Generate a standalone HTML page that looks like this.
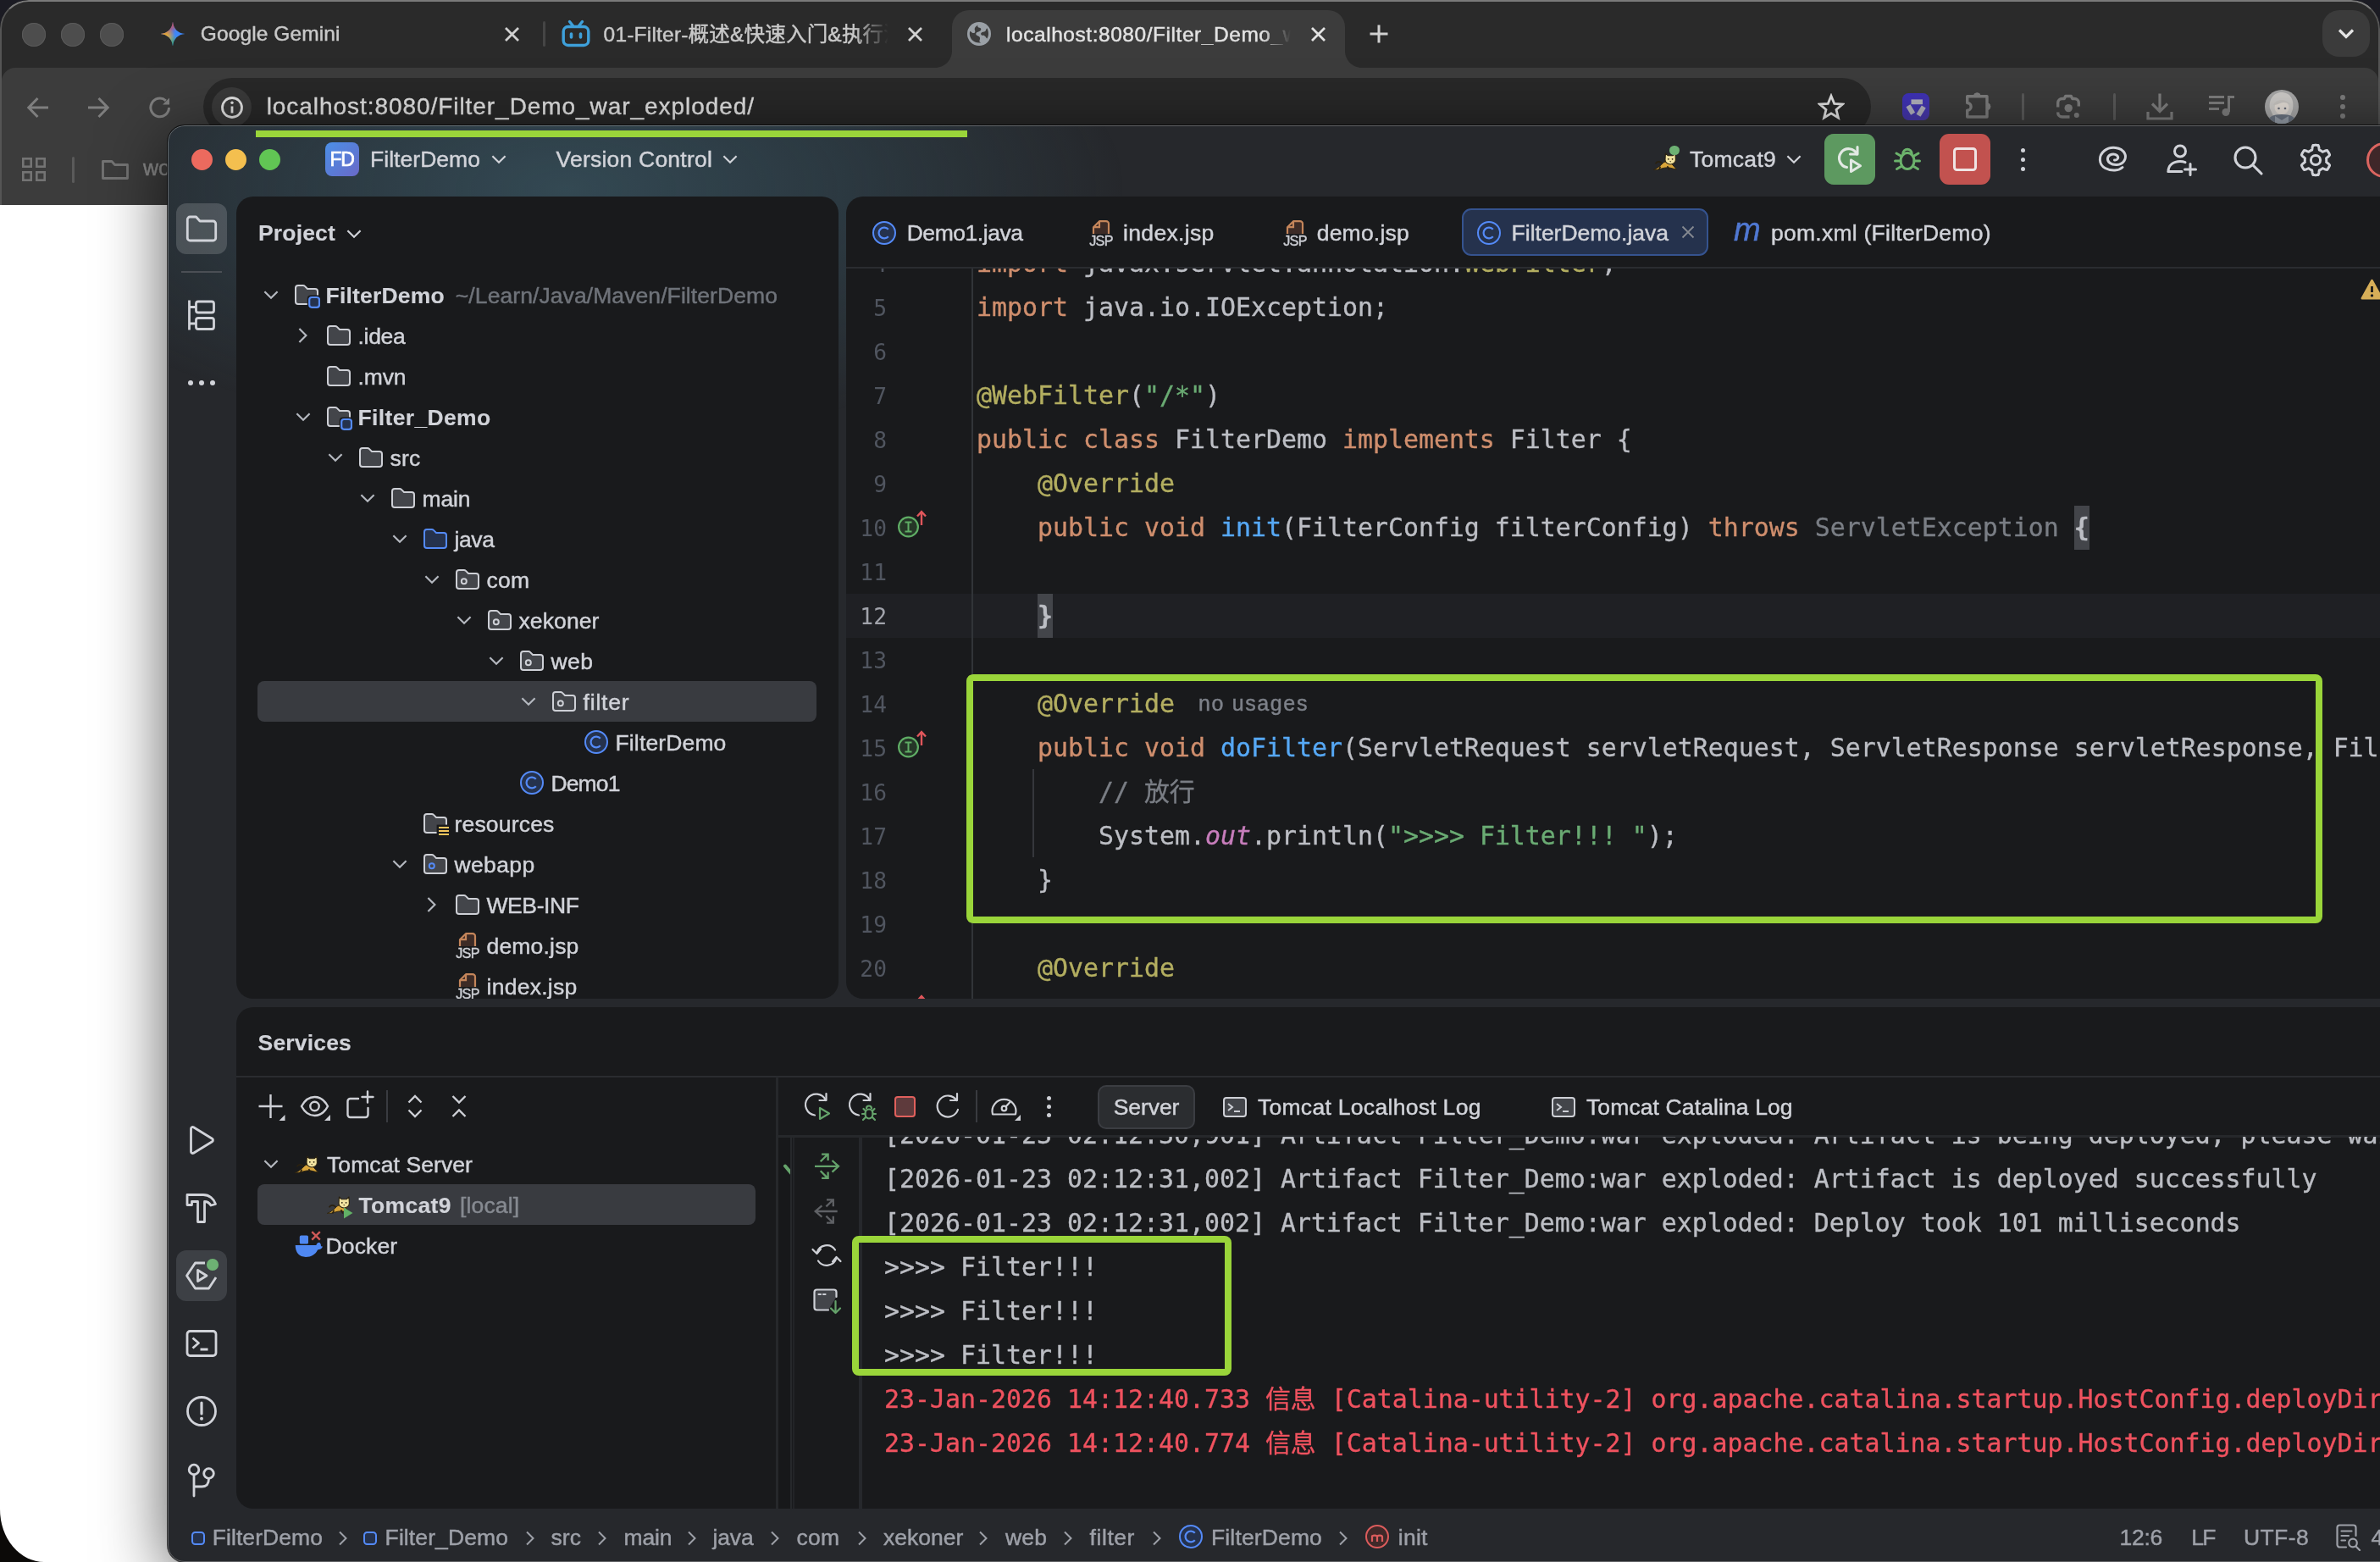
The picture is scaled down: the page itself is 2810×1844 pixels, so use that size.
<!DOCTYPE html>
<html lang="zh"><head><meta charset="utf-8"><title>localhost:8080/Filter_Demo_war_exploded/</title>
<style>
html,body{margin:0;padding:0}
html{overflow:hidden;background:#0c0a08}
body{width:2810px;height:1844px;position:relative;overflow:hidden;background:linear-gradient(180deg,#1b1b23 0,#1b1b23 8%,#0c0a08 92%);font-family:"Liberation Sans","Noto Sans CJK SC",sans-serif;-webkit-font-smoothing:antialiased}
.a{position:absolute;display:block}
.clip{overflow:hidden}
.t{position:absolute;white-space:nowrap;display:block;-webkit-text-stroke:0.45px currentColor}
.m{position:absolute;white-space:pre;display:block;font-family:"DejaVu Sans Mono","Liberation Mono","Noto Sans CJK SC",monospace}
.code{font-size:29.9px;line-height:52px;height:52px;color:#bcbec4;-webkit-text-stroke:0.35px currentColor}
.code span{display:inline-block;height:42px;line-height:42px;vertical-align:middle}
#cw{position:absolute;left:0;top:0;width:2810px;height:242px;border-radius:34px 34px 0 0;overflow:hidden;background:#2a2a2a;will-change:transform}
#cw:after{content:"";position:absolute;left:0;top:0;right:0;height:242px;border-radius:34px 34px 0 0;border:2px solid #555;border-top:2px solid #7a7a7a;border-bottom:none;box-sizing:border-box;pointer-events:none}
#tabstrip{position:absolute;left:0;top:0;width:2810px;height:82px;background:#2a2a2a}
#toolbar{position:absolute;left:2px;top:80px;width:2806px;height:162px;background:#3c3c3c;border-radius:16px 16px 0 0}
#page{position:absolute;left:0;top:241px;width:2810px;height:1603px;background:#fff;border-bottom-left-radius:52px 62px}
#ide{position:absolute;left:198px;top:148px;width:2700px;height:1696px;border-radius:20px;overflow:hidden;background:#26282c;box-shadow:0 0 0 1px rgba(0,0,0,0.7),0 16px 80px rgba(0,0,0,0.66)}
#ide:after{content:"";position:absolute;inset:0;border-radius:20px;border:1.5px solid rgba(255,255,255,0.28);pointer-events:none}
#idein{position:absolute;left:-198px;top:-148px;width:2810px;height:1844px;will-change:transform}
#glow{position:absolute;left:198px;top:148px;width:1700px;height:800px;background:radial-gradient(ellipse 660px 300px at 470px 75px,rgba(72,122,142,0.40),rgba(62,108,128,0.27) 45%,rgba(50,90,110,0) 100%)}
.panel{position:absolute;background:#191a1c;border-radius:20px}
</style></head>
<body>
<div id="page"></div>
<div id="cw">
<div id="tabstrip"></div>
<div class="a" style="left:25.7px;top:26.5px;width:28px;height:28px;border-radius:50%;background:#4d4d4d;box-shadow:inset 0 0 0 1px #5a5a5a"></div>
<div class="a" style="left:71.9px;top:26.5px;width:28px;height:28px;border-radius:50%;background:#4d4d4d;box-shadow:inset 0 0 0 1px #5a5a5a"></div>
<div class="a" style="left:117.8px;top:26.5px;width:28px;height:28px;border-radius:50%;background:#4d4d4d;box-shadow:inset 0 0 0 1px #5a5a5a"></div>
<svg class="a" style="left:189px;top:25px" width="30" height="30" viewBox="0 0 30 30"><defs><radialGradient id="g1" cx="0.1" cy="0.25" r="0.55"><stop offset="0" stop-color="#f2403a"/><stop offset="1" stop-color="#f2403a" stop-opacity="0"/></radialGradient><radialGradient id="g2" cx="0.2" cy="0.62" r="0.4"><stop offset="0" stop-color="#fbbc12"/><stop offset="1" stop-color="#fbbc12" stop-opacity="0"/></radialGradient><radialGradient id="g3" cx="0.5" cy="1" r="0.45"><stop offset="0" stop-color="#2fa854"/><stop offset="1" stop-color="#2fa854" stop-opacity="0"/></radialGradient><radialGradient id="g4" cx="0.5" cy="0" r="0.4"><stop offset="0" stop-color="#e8453c"/><stop offset="1" stop-color="#e8453c" stop-opacity="0"/></radialGradient><clipPath id="gs"><path d="M15 0.5C15.600 8.800 21.200 14.400 29.500 15C21.200 15.600 15.600 21.200 15 29.500C14.400 21.200 8.800 15.600 0.500 15C8.800 14.400 14.400 8.800 15 0.500Z"/></clipPath></defs><g clip-path="url(#gs)"><rect width="30" height="30" fill="#3e86f6"/><rect width="30" height="30" fill="url(#g4)"/><rect width="30" height="30" fill="url(#g3)"/><rect width="30" height="30" fill="url(#g1)"/><rect width="30" height="30" fill="url(#g2)"/></g></svg>
<span class="t" style="left:236.8px;top:27.9px;font-size:24.5px;line-height:24.5px;color:#c9c9c9;letter-spacing:0.100px;">Google Gemini</span>
<svg class="a" style="left:594.5px;top:30.5px" width="19.0" height="19.0" viewBox="-9.5 -9.5 19.0 19.0"><path d="M-7.5 -7.5L7.5 7.5M7.5 -7.5L-7.5 7.5" stroke="#d0d0d0" stroke-width="2.8" fill="none"/></svg>
<div class="a" style="left:641px;top:25px;width:3px;height:30px;background:#454545;border-radius:2px"></div>
<svg class="a" style="left:663px;top:23px" width="34" height="33" viewBox="0 0 34 33" fill="none" stroke="#3ea0da" stroke-width="3.4" stroke-linecap="round" stroke-linejoin="round"><rect x="2.2" y="8.5" width="29.6" height="22" rx="5.5"/><path d="M9.5 2.5l4 5M24.5 2.5l-4 5"/><path d="M11.5 17v4M22.5 17v4" stroke-width="3.6"/></svg>
<span class="t" style="left:712.6px;top:27.6px;font-size:24.5px;line-height:25px;color:#c9c9c9;width:336px;overflow:hidden;white-space:nowrap;letter-spacing:0.2px;-webkit-mask-image:linear-gradient(90deg,#000 88%,transparent 100%);mask-image:linear-gradient(90deg,#000 88%,transparent 100%)">01-Filter-概述&amp;快速入门&amp;执行流程&amp;拦截路径</span>
<svg class="a" style="left:1070.5px;top:30.5px" width="19.0" height="19.0" viewBox="-9.5 -9.5 19.0 19.0"><path d="M-7.5 -7.5L7.5 7.5M7.5 -7.5L-7.5 7.5" stroke="#d0d0d0" stroke-width="2.8" fill="none"/></svg>
<div class="a" style="left:1124px;top:12px;width:464px;height:70px;background:#3c3c3c;border-radius:20px 20px 0 0"></div>
<svg class="a" style="left:1104px;top:60px" width="20" height="20" viewBox="0 0 20 20"><path d="M20 0V20H0C11 20 20 11 20 0Z" fill="#3c3c3c"/></svg>
<svg class="a" style="left:1588px;top:60px" width="20" height="20" viewBox="0 0 20 20"><path d="M0 0V20H20C9 20 0 11 0 0Z" fill="#3c3c3c"/></svg>
<svg class="a" style="left:1142px;top:26px" width="28" height="28" viewBox="0 0 28 28"><circle cx="14" cy="14" r="14" fill="#9aa0a6"/><path d="M12.5 3.2c-1 2 .5 3.3 2 3.6 2 .4 2.4 2 1 3.4-1.6 1.6-4.8 1-5.2 3.6-.3 2 2.2 2.4 3.6 3.2 1.7 1 1.2 3.2.6 4.8-.5 1.4.6 2.4 1.8 2.6C9 25.6 2.8 20.4 2.8 14c0-1.2.2-2.3.5-3.3 1.8.9 2.6 2.6 4.4 2.4 2-.2 1.8-2.2 1.2-3.6-.7-1.7.3-3.6 2-4.7.5-.3 1-.9 1.6-1.6zM25 14c0 2-.6 4-1.600 5.600-1.2-.8-1.4-2.600-2.800-3.200-1.600-.7-3.600.2-4.400-1.800-.6-1.600 1-2.800 2.600-2.900 1.800-.1 3-.9 3.400-2.700.2-.8.6-1.300 1.200-1.700C24.400 9.200 25 11.500 25 14z" fill="#3c3c3c"/></svg>
<span class="t" style="left:1188px;top:27.6px;font-size:24.5px;line-height:25px;color:#e3e3e3;width:336px;overflow:hidden;white-space:nowrap;letter-spacing:0.55px;-webkit-mask-image:linear-gradient(90deg,#000 90%,transparent 100%);mask-image:linear-gradient(90deg,#000 90%,transparent 100%)">localhost:8080/Filter_Demo_war_exploded</span>
<svg class="a" style="left:1546.5px;top:30.5px" width="19.0" height="19.0" viewBox="-9.5 -9.5 19.0 19.0"><path d="M-7.5 -7.5L7.5 7.5M7.5 -7.5L-7.5 7.5" stroke="#e3e3e3" stroke-width="2.8" fill="none"/></svg>
<svg class="a" style="left:1616px;top:28px" width="24" height="24" viewBox="0 0 24 24"><path d="M12 1.500V22.500M1.500 12H22.500" stroke="#d0d0d0" stroke-width="3" fill="none"/></svg>
<div class="a" style="left:2742px;top:12px;width:56px;height:55px;background:#3b3b3b;border-radius:20px"></div>
<svg class="a" style="left:2758px;top:32px" width="24" height="16" viewBox="0 0 24 16"><path d="M4 3.500L12 11.500L20 3.500" stroke="#e3e3e3" stroke-width="3.2" fill="none"/></svg>
<div id="toolbar"></div>
<svg class="a" style="left:30px;top:112px" width="30" height="30" viewBox="0 0 30 30" fill="none" stroke="#7e7e7e" stroke-width="3"><path d="M27 15H4M14.500 4L3.800 15L14.500 26"/></svg>
<svg class="a" style="left:101px;top:112px" width="30" height="30" viewBox="0 0 30 30" fill="none" stroke="#7e7e7e" stroke-width="3"><path d="M3 15H26M15.500 4L26.200 15L15.500 26"/></svg>
<svg class="a" style="left:174px;top:112px" width="30" height="30" viewBox="0 0 30 30" fill="none" stroke="#7e7e7e" stroke-width="3"><path d="M25.500 15A10.800 10.800 0 1 1 21.800 6.800"/><path d="M26 3.500V11.500H18z" fill="#7e7e7e" stroke="none"/></svg>
<div class="a" style="left:240px;top:92px;width:1969px;height:68px;background:#282828;border-radius:34px"></div>
<div class="a" style="left:250px;top:103px;width:47px;height:47px;background:#3a3a3a;border-radius:50%"></div>
<svg class="a" style="left:259.500px;top:112.500px" width="28" height="28" viewBox="0 0 28 28" fill="none" stroke="#e3e3e3" stroke-width="2.800"><circle cx="14" cy="14" r="11.500"/><path d="M14 12.500V20.500" /><circle cx="14" cy="8.300" r="1.700" fill="#e3e3e3" stroke="none"/></svg>
<span class="t" style="left:314.7px;top:112.3px;font-size:28px;line-height:28px;color:#e3e3e3;letter-spacing:0.945px;-webkit-text-stroke:0.35px #e3e3e3;">localhost:8080/Filter_Demo_war_exploded/</span>
<svg class="a" style="left:2146px;top:110px" width="32" height="32" viewBox="0 0 32 32" fill="none" stroke="#e3e3e3" stroke-width="2.800" stroke-linejoin="miter"><path d="M16 3.200L19.700 12.300L29.500 13L22 19.400L24.400 29L16 23.800L7.600 29L10 19.400L2.500 13L12.300 12.300Z"/></svg>
<div class="a" style="left:2245.700px;top:109.600px;width:32.500px;height:32.500px;background:linear-gradient(160deg,#3c30bb,#4a3aa8);border-radius:7.500px"></div>
<svg class="a" style="left:2246px;top:110px" width="32" height="32" viewBox="0 0 32 32" fill="none" stroke="#b3b2be" stroke-width="5.800" stroke-linejoin="round" stroke-linecap="butt"><path d="M10.500 10.300H24"/><path d="M25.300 16L19 26.300"/><path d="M7 14.800L12.600 24.300"/></svg>
<svg class="a" style="left:2316px;top:106px" width="40" height="40" viewBox="0 0 40 40" fill="none" stroke="#7e7e7e" stroke-width="3.400" stroke-linejoin="round"><path d="M6.700 7.700H30V32H6.700V24.300A4.400 4.400 0 0 0 6.700 15.500Z"/><path d="M14.300 7.700A4 4 0 0 1 22.300 7.700ZM30 15.800A4 4 0 0 1 30 23.800Z" fill="#7e7e7e" stroke-width="1"/></svg>
<div class="a" style="left:2386.500px;top:110px;width:3px;height:32px;background:#5a5a5a;border-radius:2px"></div>
<svg class="a" style="left:2424px;top:108px" width="36" height="36" viewBox="0 0 36 36" fill="none" stroke="#7e7e7e" stroke-width="3.400" stroke-linecap="butt" stroke-linejoin="round"><path d="M5.700 18.500V13.500A5 5 0 0 1 10.700 8.500H13.200L14.700 5.500H21.300L22.800 8.500H25.300A5 5 0 0 1 30.300 13.500V17.500"/><path d="M5.700 24.500V25A5 5 0 0 0 10.700 30H19.500"/><circle cx="18.200" cy="19.600" r="4.700" fill="#7e7e7e" stroke="none"/><circle cx="27.800" cy="28" r="3" fill="#7e7e7e" stroke="none"/></svg>
<div class="a" style="left:2494.500px;top:110px;width:3px;height:32px;background:#5a5a5a;border-radius:2px"></div>
<svg class="a" style="left:2533px;top:108px" width="34" height="36" viewBox="0 0 34 36" fill="none" stroke="#7e7e7e" stroke-width="3.200"><path d="M17 2.500V23M8 14.500L17 23.500L26 14.500M3 24V32H31V24"/></svg>
<svg class="a" style="left:2607px;top:111px" width="32" height="28" viewBox="0 0 32 28" fill="none" stroke="#7e7e7e" stroke-width="3"><path d="M1 3.500H19M1 10.500H19M1 17.500H13"/><path d="M24.500 21V3.500H31" /><circle cx="21" cy="21.500" r="4.500" fill="#7e7e7e" stroke="none"/></svg>
<svg class="a" style="left:2674px;top:106px" width="40" height="40" viewBox="0 0 40 40"><defs><clipPath id="av"><circle cx="20" cy="20" r="20"/></clipPath></defs><g clip-path="url(#av)"><rect width="40" height="40" fill="#a9a9a9"/><path d="M6 22C4 8 14 2 21 3c9 1 14 8 12 20l-3 8H10z" fill="#cfcdca"/><ellipse cx="20" cy="21" rx="8.500" ry="8" fill="#e6dfd8"/><path d="M10 18c3-7 14-9 21 0-5-3-9-4-13-2-3 1-5 2-8 2z" fill="#c9c6c2"/><circle cx="16.500" cy="22" r="1.300" fill="#6a6f7a"/><circle cx="24" cy="22" r="1.300" fill="#6a6f7a"/><path d="M2 40c1-8 8-11 18-11s17 3 18 11z" fill="#6d7684"/><path d="M12 31l8 5 8-5v9H12z" fill="#9aa2ad"/></g></svg>
<div class="a" style="left:2763px;top:112px;width:6px;height:6px;border-radius:50%;background:#7e7e7e"></div>
<div class="a" style="left:2763px;top:123px;width:6px;height:6px;border-radius:50%;background:#7e7e7e"></div>
<div class="a" style="left:2763px;top:134px;width:6px;height:6px;border-radius:50%;background:#7e7e7e"></div>
<svg class="a" style="left:26px;top:186px" width="28" height="28" viewBox="0 0 28 28" fill="none" stroke="#747474" stroke-width="2.600"><rect x="1.300" y="1.300" width="9.400" height="9.400"/><rect x="17.300" y="1.300" width="9.400" height="9.400"/><rect x="1.300" y="17.300" width="9.400" height="9.400"/><rect x="17.300" y="17.300" width="9.400" height="9.400"/></svg>
<div class="a" style="left:84.500px;top:185px;width:3px;height:31px;background:#5a5a5a;border-radius:2px"></div>
<svg class="a" style="left:119px;top:188px" width="34" height="25" viewBox="0 0 34 25" fill="none" stroke="#747474" stroke-width="2.800" stroke-linejoin="round"><path d="M2.500 22.500V2.500H13l3.500 4H31.500V22.500Z"/></svg>
<span class="t" style="left:169px;top:186px;font-size:25px;line-height:25px;color:#8a8a8a">workspace</span>
</div>
<div id="ide"><div id="idein"><div id="glow"></div>
<div class="a" style="left:302px;top:154px;width:840px;height:8px;background:#9ad53a"></div>
<div class="a" style="left:225.5px;top:175.500px;width:25px;height:25px;border-radius:50%;background:#ec6a5e"></div>
<div class="a" style="left:265.5px;top:175.500px;width:25px;height:25px;border-radius:50%;background:#f4bf4f"></div>
<div class="a" style="left:305.5px;top:175.500px;width:25px;height:25px;border-radius:50%;background:#61c554"></div>
<div class="a" style="left:384px;top:168px;width:40px;height:40px;border-radius:8px;background:linear-gradient(135deg,#4c8fe6 0%,#5a7bd6 55%,#6a69c8 100%)"></div>
<span class="t" style="left:389.5px;top:177.1px;font-size:23px;line-height:23px;color:#ffffff;letter-spacing:-1.279px;-webkit-text-stroke:0.7px #fff;">FD</span>
<span class="t" style="left:437.0px;top:174.6px;font-size:26.5px;line-height:26.5px;color:#d1d3d9;letter-spacing:0.043px;">FilterDemo</span>
<svg class="a" style="left:573.0px;top:172.0px" width="32" height="32" viewBox="0 0 16 16" stroke-width="1"><path d="M4.200 6.100L8 9.900L11.800 6.100" fill="none" stroke="#d1d3d9" stroke-width="1.100"/></svg>
<span class="t" style="left:656.5px;top:174.6px;font-size:26.5px;line-height:26.5px;color:#d1d3d9;letter-spacing:0.222px;">Version Control</span>
<svg class="a" style="left:846.0px;top:172.0px" width="32" height="32" viewBox="0 0 16 16" stroke-width="1"><path d="M4.200 6.100L8 9.900L11.800 6.100" fill="none" stroke="#d1d3d9" stroke-width="1.100"/></svg>
<svg class="a" style="left:1950.0px;top:174.0px" width="32" height="32" viewBox="0 0 16 16" stroke-width="1"><path d="M6.200 9.500C4.800 8 3.200 8.200 2.300 9.700" fill="none" stroke="#2a2110" stroke-width="0.9"/><path d="M1.200 13.200C3.800 12.300 5.300 10.600 6.800 9.200C8.400 7.900 10 8.400 11.600 9.400L14.700 13C12.800 12.600 11.200 12 9.600 11.900C7 11.700 4.200 13.500 1.200 13.200Z" fill="#d9a53a" stroke="#2a2110" stroke-width="0.45"/><path d="M9.300 11.100L10.400 13.300M5.200 11.300L4.300 13.300" fill="none" stroke="#2a2110" stroke-width="0.8"/><path d="M8.200 3.500L9.700 4.900H12.500L14 3.500L14.200 7.200C14.200 8.800 12.800 10 11.100 10C9.400 10 8 8.800 8 7.200Z" fill="#f2e3a0" stroke="#2a2110" stroke-width="0.55" stroke-linejoin="round"/><circle cx="9.900" cy="6.900" r="0.450" fill="#2a2110"/><circle cx="12.300" cy="6.900" r="0.450" fill="#2a2110"/><path d="M10.600 8.100H11.600L11.100 8.700Z" fill="#2a2110"/></svg>
<div class="a" style="left:1971px;top:171.600px;width:11.600px;height:11.600px;border-radius:50%;background:#6db173"></div>
<span class="t" style="left:1995.0px;top:174.6px;font-size:26.5px;line-height:26.5px;color:#d1d3d9;letter-spacing:0.265px;">Tomcat9</span>
<svg class="a" style="left:2102.0px;top:172.0px" width="32" height="32" viewBox="0 0 16 16" stroke-width="1"><path d="M4.200 6.100L8 9.900L11.800 6.100" fill="none" stroke="#d1d3d9" stroke-width="1.100"/></svg>
<div class="a" style="left:2154px;top:158px;width:60px;height:60px;border-radius:11px;background:#5d9960"></div>
<svg class="a" style="left:2166px;top:170px" width="36" height="36" viewBox="0 0 36 36" fill="none" stroke="#e2e9e3" stroke-width="3.100" stroke-linejoin="round" stroke-linecap="round"><path d="M14.500 27.500A11 11 0 1 1 26.500 12"/><path d="M27 3.500V12H18.500"/><path d="M19.500 19V32.500L30.500 25.800Z"/></svg>
<svg class="a" style="left:2234px;top:170px" width="36" height="36" viewBox="0 0 36 36" fill="none" stroke="#6cb36c" stroke-width="3" stroke-linecap="round"><ellipse cx="18" cy="20" rx="8" ry="9.500"/><path d="M12.800 11.500A5.200 5.200 0 0 1 23.200 11.500"/><path d="M10 20H3.500M26 20H32.500M11 14.500L5 11M25 14.500L31 11M11.500 26L5.500 29.500M24.500 26L30.500 29.500"/></svg>
<div class="a" style="left:2290px;top:158px;width:60px;height:60px;border-radius:11px;background:#c2524f"></div>
<div class="a" style="left:2306px;top:174.200px;width:28px;height:28px;border:3px solid #f0e4e4;border-radius:4.500px;box-sizing:border-box"></div>
<div class="a" style="left:2385.500px;top:174.5px;width:5px;height:5px;border-radius:50%;background:#d1d3d9"></div>
<div class="a" style="left:2385.500px;top:185.5px;width:5px;height:5px;border-radius:50%;background:#d1d3d9"></div>
<div class="a" style="left:2385.500px;top:196.5px;width:5px;height:5px;border-radius:50%;background:#d1d3d9"></div>
<svg class="a" style="left:2475px;top:170px" width="38" height="36" viewBox="0 0 38 36" fill="none" stroke="#d1d3d9" stroke-width="3" stroke-linecap="round"><path d="M31 27.500C27 31.500 18 32.500 10.500 28.500C3 24.500 2 14 9.500 8C17 2 29.500 3.500 33.500 11C36.500 17 32 24 24.500 24.500C18 25 12.500 21.500 13.500 16.500C14.500 12 21 10.500 24.500 13.500C27 16 25 19.500 21.500 19"/></svg>
<svg class="a" style="left:2556px;top:168px" width="40" height="40" viewBox="0 0 40 40" fill="none" stroke="#d1d3d9" stroke-width="3" stroke-linecap="round"><circle cx="18" cy="10.500" r="6.500"/><path d="M4 34.500C4 27 10 22.500 18 22.500C20.500 22.500 22.500 23 24 23.600M3.800 34.500H20"/><path d="M30 25.500V38.500M23.500 32H36.500"/></svg>
<svg class="a" style="left:2635px;top:170px" width="38" height="38" viewBox="0 0 38 38" fill="none" stroke="#d1d3d9" stroke-width="3.100" stroke-linecap="round"><circle cx="16" cy="16" r="12"/><path d="M25 25L35 35"/></svg>
<svg class="a" style="left:2714px;top:168.500px" width="40" height="40" viewBox="-20 -20 40 40" fill="none" stroke="#d1d3d9" stroke-width="3" stroke-linejoin="round"><path d="M12.7 -0.0L12.7 -0.6L12.7 -1.1L12.6 -1.7L12.5 -2.2L13.4 -3.0L14.7 -3.9L15.9 -5.0L16.6 -6.1L16.4 -6.8L16.0 -7.5L15.7 -8.2L15.3 -8.8L14.9 -9.5L14.5 -10.2L14.0 -10.8L13.6 -11.4L12.3 -11.2L10.7 -10.7L9.3 -10.2L8.2 -9.7L7.7 -10.1L7.3 -10.4L6.8 -10.7L6.4 -11.0L5.9 -11.3L5.4 -11.5L4.9 -11.7L4.3 -11.9L4.1 -13.1L3.9 -14.7L3.6 -16.2L3.1 -17.4L2.3 -17.5L1.5 -17.6L0.8 -17.7L0.0 -17.7L-0.8 -17.7L-1.5 -17.6L-2.3 -17.5L-3.1 -17.4L-3.6 -16.2L-3.9 -14.7L-4.1 -13.1L-4.3 -11.9L-4.9 -11.7L-5.4 -11.5L-5.9 -11.3L-6.3 -11.0L-6.8 -10.7L-7.3 -10.4L-7.7 -10.1L-8.2 -9.7L-9.3 -10.2L-10.7 -10.7L-12.3 -11.2L-13.6 -11.4L-14.0 -10.8L-14.5 -10.2L-14.9 -9.5L-15.3 -8.9L-15.7 -8.2L-16.0 -7.5L-16.4 -6.8L-16.6 -6.1L-15.9 -5.0L-14.7 -3.9L-13.4 -3.0L-12.5 -2.2L-12.6 -1.7L-12.7 -1.1L-12.7 -0.6L-12.7 -0.0L-12.7 0.6L-12.7 1.1L-12.6 1.7L-12.5 2.2L-13.4 3.0L-14.7 3.9L-15.9 5.0L-16.6 6.1L-16.4 6.8L-16.0 7.5L-15.7 8.2L-15.3 8.9L-14.9 9.5L-14.5 10.2L-14.0 10.8L-13.6 11.4L-12.3 11.2L-10.7 10.7L-9.3 10.2L-8.2 9.7L-7.7 10.1L-7.3 10.4L-6.8 10.7L-6.4 11.0L-5.9 11.3L-5.4 11.5L-4.9 11.7L-4.3 11.9L-4.1 13.1L-3.9 14.7L-3.6 16.2L-3.1 17.4L-2.3 17.5L-1.5 17.6L-0.8 17.7L-0.0 17.7L0.8 17.7L1.5 17.6L2.3 17.5L3.1 17.4L3.6 16.2L3.9 14.7L4.1 13.1L4.3 11.9L4.9 11.7L5.4 11.5L5.9 11.3L6.3 11.0L6.8 10.7L7.3 10.4L7.7 10.1L8.2 9.7L9.3 10.2L10.7 10.7L12.3 11.2L13.6 11.4L14.0 10.8L14.5 10.2L14.9 9.5L15.3 8.8L15.7 8.2L16.0 7.5L16.4 6.8L16.6 6.1L15.9 5.0L14.7 3.9L13.4 3.0L12.5 2.2L12.6 1.7L12.7 1.1L12.7 0.6Z"/><circle r="5.600"/></svg>
<div class="a" style="left:2794px;top:168px;width:42px;height:42px;border-radius:50%;background:#3f2729;border:3px solid #db6560;box-sizing:border-box"></div>
<div class="a" style="left:208px;top:240px;width:60px;height:60px;border-radius:12px;background:rgba(255,255,255,0.16)"></div>
<svg class="a" style="left:218px;top:252px" width="40" height="36" viewBox="0 0 40 36" fill="none" stroke="#d1d3d9" stroke-width="2.800" stroke-linejoin="round"><path d="M3.300 7A3 3 0 0 1 6.300 4H13.500L18 9H33.700A3 3 0 0 1 36.700 12V29A3 3 0 0 1 33.700 32H6.300A3 3 0 0 1 3.300 29Z"/></svg>
<div class="a" style="left:214px;top:320px;width:48px;height:2px;background:#4b4f55"></div>
<svg class="a" style="left:220px;top:352px" width="36" height="40" viewBox="0 0 36 40" fill="none" stroke="#d1d3d9" stroke-width="2.800" stroke-linejoin="round"><path d="M3.500 2.500V37.500M3.500 10.500H11M3.500 30H11"/><rect x="11.500" y="4" width="21" height="13" rx="2.500"/><rect x="11.500" y="23.500" width="21" height="13" rx="2.500"/></svg>
<div class="a" style="left:222px;top:449px;width:6px;height:6px;border-radius:50%;background:#d1d3d9"></div>
<div class="a" style="left:235px;top:449px;width:6px;height:6px;border-radius:50%;background:#d1d3d9"></div>
<div class="a" style="left:248px;top:449px;width:6px;height:6px;border-radius:50%;background:#d1d3d9"></div>
<svg class="a" style="left:218px;top:1326px" width="40" height="40" viewBox="0 0 40 40" fill="none" stroke="#d1d3d9" stroke-width="2.800" stroke-linejoin="round"><path d="M7.500 6.500A2 2 0 0 1 10.500 4.800L32.500 18.300A2 2 0 0 1 32.500 21.700L10.500 35.200A2 2 0 0 1 7.500 33.500Z"/></svg>
<svg class="a" style="left:218px;top:1406px" width="40" height="40" viewBox="0 0 40 40" fill="none" stroke="#d1d3d9" stroke-width="2.800" stroke-linejoin="round"><path d="M3 4.500H22C29 4.500 34.500 9 36.500 15.500L31 17C29 13.500 26.500 12.500 23.500 12.500V36.500H15.500V12.500H8.500V16.500H3Z"/></svg>
<div class="a" style="left:208px;top:1476px;width:60px;height:60px;border-radius:12px;background:#3d4045"></div>
<svg class="a" style="left:218px;top:1486px" width="40" height="40" viewBox="0 0 40 40" fill="none" stroke="#d1d3d9" stroke-width="2.800" stroke-linejoin="round"><path d="M24 5H12.500L2.500 20L12.500 35H28.500L37 22"/><path d="M15.500 13.500V26.500L26 20Z"/></svg>
<div class="a" style="left:244.200px;top:1486px;width:13.600px;height:13.600px;border-radius:50%;background:#6db173"></div>
<svg class="a" style="left:218px;top:1566px" width="40" height="40" viewBox="0 0 40 40" fill="none" stroke="#d1d3d9" stroke-width="2.800" stroke-linejoin="round"><rect x="3" y="5.500" width="34" height="29" rx="3.500"/><path d="M9.500 13.500L16.500 19.500L9.500 25.500M18.500 27H27.500"/></svg>
<svg class="a" style="left:218px;top:1646px" width="40" height="40" viewBox="0 0 40 40" fill="none" stroke="#d1d3d9" stroke-width="2.800"><circle cx="20" cy="20" r="16.500"/><path d="M20 10V23" stroke-width="3.200" stroke-linecap="round"/><circle cx="20" cy="28.800" r="2" fill="#d1d3d9" stroke="none"/></svg>
<svg class="a" style="left:218px;top:1726.5px" width="40" height="42" viewBox="0 0 40 42" fill="none" stroke="#d1d3d9" stroke-width="2.800" stroke-linecap="round"><circle cx="11" cy="8" r="5.800"/><circle cx="28.500" cy="12.500" r="5.800"/><path d="M11 14V39M11 28H20.500C25.500 28 28.500 25 28.500 18.500"/></svg>
<div class="panel" style="left:279px;top:232px;width:711px;height:947px"></div>
<div class="a clip" style="left:279px;top:232px;width:711px;height:947px;border-radius:20px"><div class="a" style="left:-279px;top:-232px">
<span class="t" style="left:305.0px;top:261.6px;font-size:26.5px;line-height:26.5px;color:#d1d3d9;font-weight:700;-webkit-text-stroke:0.15px currentColor;letter-spacing:0.166px;">Project</span>
<svg class="a" style="left:402.0px;top:260.0px" width="32" height="32" viewBox="0 0 16 16" stroke-width="1"><path d="M4.200 6.100L8 9.900L11.800 6.100" fill="none" stroke="#d1d3d9" stroke-width="1.100"/></svg>
<svg class="a" style="left:304.0px;top:332.0px" width="32" height="32" viewBox="0 0 16 16" stroke-width="1"><path d="M4.200 6.100L8 9.900L11.800 6.100" fill="none" stroke="#b4b8bf" stroke-width="1.100"/></svg>
<svg class="a" style="left:346.0px;top:332.0px" width="32" height="32" viewBox="0 0 16 16" stroke-width="1"><path d="M1.5 4C1.5 3.17 2.17 2.5 3 2.5h2.9c.4 0 .78.16 1.06.44L8.5 4.5H13c.83 0 1.5.67 1.5 1.500v6c0 .83-.67 1.500-1.500 1.500H3c-.83 0-1.500-.67-1.500-1.500V4z" fill="#43454a" stroke="#ced0d6"/><rect x="8.400" y="8.300" width="8" height="8" rx="2" fill="#191a1c"/><rect x="9.600" y="9.500" width="5.900" height="5.900" rx="1.500" fill="#25324d" stroke="#548af7" stroke-width="1.100"/></svg>
<span class="t" style="left:384.5px;top:336.1px;font-size:26.5px;line-height:26.5px;color:#d1d3d9;font-weight:700;-webkit-text-stroke:0.15px currentColor;letter-spacing:0.189px;">FilterDemo</span>
<span class="t" style="left:537.8px;top:336.1px;font-size:26.5px;line-height:26.5px;color:#6f737a;letter-spacing:0.084px;">~/Learn/Java/Maven/FilterDemo</span>
<svg class="a" style="left:342.0px;top:380.0px" width="32" height="32" viewBox="0 0 16 16" stroke-width="1"><path d="M5.700 4L9.700 8L5.700 12" fill="none" stroke="#b4b8bf" stroke-width="1.100"/></svg>
<svg class="a" style="left:384.0px;top:380.0px" width="32" height="32" viewBox="0 0 16 16" stroke-width="1"><path d="M1.5 4C1.5 3.17 2.17 2.5 3 2.5h2.9c.4 0 .78.16 1.06.44L8.5 4.5H13c.83 0 1.5.67 1.5 1.500v6c0 .83-.67 1.500-1.500 1.500H3c-.83 0-1.500-.67-1.500-1.500V4z" fill="#43454a" stroke="#ced0d6"/></svg>
<span class="t" style="left:422.5px;top:384.1px;font-size:26.5px;line-height:26.5px;color:#d1d3d9;letter-spacing:-0.292px;">.idea</span>
<svg class="a" style="left:384.0px;top:428.0px" width="32" height="32" viewBox="0 0 16 16" stroke-width="1"><path d="M1.5 4C1.5 3.17 2.17 2.5 3 2.5h2.9c.4 0 .78.16 1.06.44L8.5 4.5H13c.83 0 1.5.67 1.5 1.500v6c0 .83-.67 1.500-1.500 1.500H3c-.83 0-1.500-.67-1.500-1.500V4z" fill="#43454a" stroke="#ced0d6"/></svg>
<span class="t" style="left:422.5px;top:432.1px;font-size:26.5px;line-height:26.5px;color:#d1d3d9;letter-spacing:-0.106px;">.mvn</span>
<svg class="a" style="left:342.0px;top:476.0px" width="32" height="32" viewBox="0 0 16 16" stroke-width="1"><path d="M4.200 6.100L8 9.900L11.800 6.100" fill="none" stroke="#b4b8bf" stroke-width="1.100"/></svg>
<svg class="a" style="left:384.0px;top:476.0px" width="32" height="32" viewBox="0 0 16 16" stroke-width="1"><path d="M1.5 4C1.5 3.17 2.17 2.5 3 2.5h2.9c.4 0 .78.16 1.06.44L8.5 4.5H13c.83 0 1.5.67 1.5 1.500v6c0 .83-.67 1.500-1.500 1.500H3c-.83 0-1.500-.67-1.500-1.500V4z" fill="#43454a" stroke="#ced0d6"/><rect x="8.400" y="8.300" width="8" height="8" rx="2" fill="#191a1c"/><rect x="9.600" y="9.500" width="5.900" height="5.900" rx="1.500" fill="#25324d" stroke="#548af7" stroke-width="1.100"/></svg>
<span class="t" style="left:422.5px;top:480.1px;font-size:26.5px;line-height:26.5px;color:#d1d3d9;font-weight:700;-webkit-text-stroke:0.15px currentColor;letter-spacing:0.350px;">Filter_Demo</span>
<svg class="a" style="left:380.0px;top:524.0px" width="32" height="32" viewBox="0 0 16 16" stroke-width="1"><path d="M4.200 6.100L8 9.900L11.800 6.100" fill="none" stroke="#b4b8bf" stroke-width="1.100"/></svg>
<svg class="a" style="left:422.0px;top:524.0px" width="32" height="32" viewBox="0 0 16 16" stroke-width="1"><path d="M1.5 4C1.5 3.17 2.17 2.5 3 2.5h2.9c.4 0 .78.16 1.06.44L8.5 4.5H13c.83 0 1.5.67 1.5 1.500v6c0 .83-.67 1.500-1.500 1.500H3c-.83 0-1.500-.67-1.500-1.500V4z" fill="#43454a" stroke="#ced0d6"/></svg>
<span class="t" style="left:460.5px;top:528.1px;font-size:26.5px;line-height:26.5px;color:#d1d3d9;letter-spacing:0.225px;">src</span>
<svg class="a" style="left:418.0px;top:572.0px" width="32" height="32" viewBox="0 0 16 16" stroke-width="1"><path d="M4.200 6.100L8 9.900L11.800 6.100" fill="none" stroke="#b4b8bf" stroke-width="1.100"/></svg>
<svg class="a" style="left:460.0px;top:572.0px" width="32" height="32" viewBox="0 0 16 16" stroke-width="1"><path d="M1.5 4C1.5 3.17 2.17 2.5 3 2.5h2.9c.4 0 .78.16 1.06.44L8.5 4.5H13c.83 0 1.5.67 1.5 1.500v6c0 .83-.67 1.500-1.500 1.500H3c-.83 0-1.500-.67-1.500-1.500V4z" fill="#43454a" stroke="#ced0d6"/></svg>
<span class="t" style="left:498.5px;top:576.1px;font-size:26.5px;line-height:26.5px;color:#d1d3d9;letter-spacing:-0.109px;">main</span>
<svg class="a" style="left:456.0px;top:620.0px" width="32" height="32" viewBox="0 0 16 16" stroke-width="1"><path d="M4.200 6.100L8 9.900L11.800 6.100" fill="none" stroke="#b4b8bf" stroke-width="1.100"/></svg>
<svg class="a" style="left:498.0px;top:620.0px" width="32" height="32" viewBox="0 0 16 16" stroke-width="1"><path d="M1.5 4C1.5 3.17 2.17 2.5 3 2.5h2.9c.4 0 .78.16 1.06.44L8.5 4.5H13c.83 0 1.5.67 1.5 1.500v6c0 .83-.67 1.500-1.500 1.500H3c-.83 0-1.500-.67-1.500-1.500V4z" fill="#25324d" stroke="#548af7"/></svg>
<span class="t" style="left:536.5px;top:624.1px;font-size:26.5px;line-height:26.5px;color:#d1d3d9;letter-spacing:-0.403px;">java</span>
<svg class="a" style="left:494.0px;top:668.0px" width="32" height="32" viewBox="0 0 16 16" stroke-width="1"><path d="M4.200 6.100L8 9.900L11.800 6.100" fill="none" stroke="#b4b8bf" stroke-width="1.100"/></svg>
<svg class="a" style="left:536.0px;top:668.0px" width="32" height="32" viewBox="0 0 16 16" stroke-width="1"><path d="M1.5 4C1.5 3.17 2.17 2.5 3 2.5h2.9c.4 0 .78.16 1.06.44L8.5 4.5H13c.83 0 1.5.67 1.5 1.500v6c0 .83-.67 1.500-1.500 1.500H3c-.83 0-1.500-.67-1.500-1.500V4z" fill="#43454a" stroke="#ced0d6"/><circle cx="5.900" cy="9.100" r="1.500" fill="none" stroke="#ced0d6"/></svg>
<span class="t" style="left:574.5px;top:672.1px;font-size:26.5px;line-height:26.5px;color:#d1d3d9;letter-spacing:0.313px;">com</span>
<svg class="a" style="left:532.0px;top:716.0px" width="32" height="32" viewBox="0 0 16 16" stroke-width="1"><path d="M4.200 6.100L8 9.900L11.800 6.100" fill="none" stroke="#b4b8bf" stroke-width="1.100"/></svg>
<svg class="a" style="left:574.0px;top:716.0px" width="32" height="32" viewBox="0 0 16 16" stroke-width="1"><path d="M1.5 4C1.5 3.17 2.17 2.5 3 2.5h2.9c.4 0 .78.16 1.06.44L8.5 4.5H13c.83 0 1.5.67 1.5 1.500v6c0 .83-.67 1.500-1.500 1.500H3c-.83 0-1.500-.67-1.500-1.500V4z" fill="#43454a" stroke="#ced0d6"/><circle cx="5.900" cy="9.100" r="1.500" fill="none" stroke="#ced0d6"/></svg>
<span class="t" style="left:612.5px;top:720.1px;font-size:26.5px;line-height:26.5px;color:#d1d3d9;letter-spacing:0.104px;">xekoner</span>
<svg class="a" style="left:570.0px;top:764.0px" width="32" height="32" viewBox="0 0 16 16" stroke-width="1"><path d="M4.200 6.100L8 9.900L11.800 6.100" fill="none" stroke="#b4b8bf" stroke-width="1.100"/></svg>
<svg class="a" style="left:612.0px;top:764.0px" width="32" height="32" viewBox="0 0 16 16" stroke-width="1"><path d="M1.5 4C1.5 3.17 2.17 2.5 3 2.5h2.9c.4 0 .78.16 1.06.44L8.5 4.5H13c.83 0 1.5.67 1.5 1.500v6c0 .83-.67 1.500-1.500 1.500H3c-.83 0-1.500-.67-1.500-1.500V4z" fill="#43454a" stroke="#ced0d6"/><circle cx="5.900" cy="9.100" r="1.500" fill="none" stroke="#ced0d6"/></svg>
<span class="t" style="left:650.5px;top:768.1px;font-size:26.5px;line-height:26.5px;color:#d1d3d9;letter-spacing:0.463px;">web</span>
<div class="a" style="left:304px;top:804px;width:660px;height:48px;border-radius:8px;background:#393b40"></div>
<svg class="a" style="left:608.0px;top:812.0px" width="32" height="32" viewBox="0 0 16 16" stroke-width="1"><path d="M4.200 6.100L8 9.900L11.800 6.100" fill="none" stroke="#b4b8bf" stroke-width="1.100"/></svg>
<svg class="a" style="left:650.0px;top:812.0px" width="32" height="32" viewBox="0 0 16 16" stroke-width="1"><path d="M1.5 4C1.5 3.17 2.17 2.5 3 2.5h2.9c.4 0 .78.16 1.06.44L8.5 4.5H13c.83 0 1.5.67 1.5 1.500v6c0 .83-.67 1.500-1.500 1.500H3c-.83 0-1.500-.67-1.500-1.500V4z" fill="#43454a" stroke="#ced0d6"/><circle cx="5.900" cy="9.100" r="1.500" fill="none" stroke="#ced0d6"/></svg>
<span class="t" style="left:688.5px;top:816.1px;font-size:26.5px;line-height:26.5px;color:#d1d3d9;letter-spacing:0.823px;">filter</span>
<svg class="a" style="left:688.0px;top:860.0px" width="32" height="32" viewBox="0 0 16 16" stroke-width="1"><circle cx="8" cy="8" r="6.500" fill="#25324d" stroke="#548af7"/><path d="M10.400 5.900A3.200 3.200 0 1 0 10.400 10.100" fill="none" stroke="#548af7" stroke-width="1.100"/></svg>
<span class="t" style="left:726.5px;top:864.1px;font-size:26.5px;line-height:26.5px;color:#d1d3d9;letter-spacing:0.143px;">FilterDemo</span>
<svg class="a" style="left:612.0px;top:908.0px" width="32" height="32" viewBox="0 0 16 16" stroke-width="1"><circle cx="8" cy="8" r="6.500" fill="#25324d" stroke="#548af7"/><path d="M10.400 5.900A3.200 3.200 0 1 0 10.400 10.100" fill="none" stroke="#548af7" stroke-width="1.100"/></svg>
<span class="t" style="left:650.5px;top:912.1px;font-size:26.5px;line-height:26.5px;color:#d1d3d9;letter-spacing:-0.884px;">Demo1</span>
<svg class="a" style="left:498.0px;top:956.0px" width="32" height="32" viewBox="0 0 16 16" stroke-width="1"><path d="M1.5 4C1.5 3.17 2.17 2.5 3 2.5h2.9c.4 0 .78.16 1.06.44L8.5 4.5H13c.83 0 1.5.67 1.5 1.500v6c0 .83-.67 1.500-1.500 1.500H3c-.83 0-1.500-.67-1.500-1.500V4z" fill="#43454a" stroke="#ced0d6"/><rect x="8.800" y="8.800" width="7.200" height="7.200" fill="#191a1c"/><path d="M10 10.500h6M10 12.500h6M10 14.500h6" stroke="#f2c55c" stroke-width="1"/></svg>
<span class="t" style="left:536.5px;top:960.1px;font-size:26.5px;line-height:26.5px;color:#d1d3d9;letter-spacing:0.184px;">resources</span>
<svg class="a" style="left:456.0px;top:1004.0px" width="32" height="32" viewBox="0 0 16 16" stroke-width="1"><path d="M4.200 6.100L8 9.900L11.800 6.100" fill="none" stroke="#b4b8bf" stroke-width="1.100"/></svg>
<svg class="a" style="left:498.0px;top:1004.0px" width="32" height="32" viewBox="0 0 16 16" stroke-width="1"><path d="M1.5 4C1.5 3.17 2.17 2.5 3 2.5h2.9c.4 0 .78.16 1.06.44L8.5 4.5H13c.83 0 1.5.67 1.5 1.500v6c0 .83-.67 1.500-1.500 1.500H3c-.83 0-1.500-.67-1.500-1.500V4z" fill="#43454a" stroke="#ced0d6"/><circle cx="5.900" cy="9.100" r="1.500" fill="none" stroke="#548af7"/></svg>
<span class="t" style="left:536.5px;top:1008.1px;font-size:26.5px;line-height:26.5px;color:#d1d3d9;letter-spacing:0.363px;">webapp</span>
<svg class="a" style="left:494.0px;top:1052.0px" width="32" height="32" viewBox="0 0 16 16" stroke-width="1"><path d="M5.700 4L9.700 8L5.700 12" fill="none" stroke="#b4b8bf" stroke-width="1.100"/></svg>
<svg class="a" style="left:536.0px;top:1052.0px" width="32" height="32" viewBox="0 0 16 16" stroke-width="1"><path d="M1.5 4C1.5 3.17 2.17 2.5 3 2.5h2.9c.4 0 .78.16 1.06.44L8.5 4.5H13c.83 0 1.5.67 1.5 1.500v6c0 .83-.67 1.500-1.500 1.500H3c-.83 0-1.500-.67-1.500-1.500V4z" fill="#43454a" stroke="#ced0d6"/></svg>
<span class="t" style="left:574.5px;top:1056.1px;font-size:26.5px;line-height:26.5px;color:#d1d3d9;letter-spacing:-0.411px;">WEB-INF</span>
<svg class="a" style="left:536.0px;top:1100.0px" width="32" height="32" viewBox="0 0 16 16" stroke-width="1"><path d="M3.500 8.500V4.600L7 1.100H11a1.500 1.500 0 0 1 1.500 1.500V8.500" fill="#3d2b26" stroke="#c4855a" stroke-width="1.100" stroke-linejoin="round"/><path d="M3.700 4.600H7V1.300" fill="none" stroke="#c4855a" stroke-width="1.100"/><text x="8" y="15.500" font-family="Liberation Sans, sans-serif" font-size="8.100" fill="#ced0d6" stroke="#ced0d6" stroke-width="0.200" text-anchor="middle" letter-spacing="-0.350">JSP</text></svg>
<span class="t" style="left:574.5px;top:1104.1px;font-size:26.5px;line-height:26.5px;color:#d1d3d9;letter-spacing:0.185px;">demo.jsp</span>
<svg class="a" style="left:536.0px;top:1148.0px" width="32" height="32" viewBox="0 0 16 16" stroke-width="1"><path d="M3.500 8.500V4.600L7 1.100H11a1.500 1.500 0 0 1 1.500 1.500V8.500" fill="#3d2b26" stroke="#c4855a" stroke-width="1.100" stroke-linejoin="round"/><path d="M3.700 4.600H7V1.300" fill="none" stroke="#c4855a" stroke-width="1.100"/><text x="8" y="15.500" font-family="Liberation Sans, sans-serif" font-size="8.100" fill="#ced0d6" stroke="#ced0d6" stroke-width="0.200" text-anchor="middle" letter-spacing="-0.350">JSP</text></svg>
<span class="t" style="left:574.5px;top:1152.1px;font-size:26.5px;line-height:26.5px;color:#d1d3d9;letter-spacing:0.268px;">index.jsp</span>
</div></div>
<div class="panel" style="left:999px;top:232px;width:1900px;height:947px"></div>
<div class="a clip" style="left:999px;top:232px;width:1811px;height:947px;border-radius:20px 0 0 20px"><div class="a" style="left:-999px;top:-232px">
<div class="a clip" style="left:999px;top:317px;width:1811px;height:862px"><div class="a" style="left:-999px;top:-317px">
<div class="a" style="left:999px;top:701px;width:1811px;height:52px;background:#1f2024"></div>
<div class="a" style="left:1146.500px;top:317px;width:2px;height:870px;background:#313438"></div>
<div class="a" style="left:2448.5px;top:597px;width:18px;height:52px;background:#43454a"></div>
<div class="a" style="left:1224.5px;top:701px;width:18px;height:52px;background:#43454a"></div>
<span class="m" style="left:947px;width:100px;text-align:right;top:297.3px;font-size:26.3px;line-height:30px;color:#50555f">4</span>
<span class="m code" style="left:1153.0px;top:283.4px"><span style="color:#cf8e6d;">import </span><span style="color:#bcbec4;">javax.servlet.annotation.</span><span style="color:#b3ae60;">WebFilter</span><span style="color:#bcbec4;">;</span></span>
<span class="m" style="left:947px;width:100px;text-align:right;top:349.3px;font-size:26.3px;line-height:30px;color:#50555f">5</span>
<span class="m code" style="left:1153.0px;top:335.4px"><span style="color:#cf8e6d;">import </span><span style="color:#bcbec4;">java.io.IOException;</span></span>
<span class="m" style="left:947px;width:100px;text-align:right;top:401.3px;font-size:26.3px;line-height:30px;color:#50555f">6</span>
<span class="m" style="left:947px;width:100px;text-align:right;top:453.3px;font-size:26.3px;line-height:30px;color:#50555f">7</span>
<span class="m code" style="left:1153.0px;top:439.4px"><span style="color:#b3ae60;">@WebFilter</span><span style="color:#bcbec4;">(</span><span style="color:#6aab73;">"/*"</span><span style="color:#bcbec4;">)</span></span>
<span class="m" style="left:947px;width:100px;text-align:right;top:505.3px;font-size:26.3px;line-height:30px;color:#50555f">8</span>
<span class="m code" style="left:1153.0px;top:491.4px"><span style="color:#cf8e6d;">public class </span><span style="color:#bcbec4;">FilterDemo </span><span style="color:#cf8e6d;">implements </span><span style="color:#bcbec4;">Filter {</span></span>
<span class="m" style="left:947px;width:100px;text-align:right;top:557.3px;font-size:26.3px;line-height:30px;color:#50555f">9</span>
<span class="m code" style="left:1153.0px;top:543.4px"><span style="color:#b3ae60;">    @Override</span></span>
<span class="m" style="left:947px;width:100px;text-align:right;top:609.3px;font-size:26.3px;line-height:30px;color:#50555f">10</span>
<span class="m code" style="left:1153.0px;top:595.4px"><span style="color:#cf8e6d;">    public void </span><span style="color:#56a8f5;">init</span><span style="color:#bcbec4;">(FilterConfig filterConfig) </span><span style="color:#cf8e6d;">throws </span><span style="color:#7a7e85;">ServletException </span><span style="color:#bcbec4;font-weight:700">{</span></span>
<span class="m" style="left:947px;width:100px;text-align:right;top:661.3px;font-size:26.3px;line-height:30px;color:#50555f">11</span>
<span class="m" style="left:947px;width:100px;text-align:right;top:713.3px;font-size:26.3px;line-height:30px;color:#a1a3ab">12</span>
<span class="m code" style="left:1153.0px;top:699.4px"><span style="color:#bcbec4;">    </span><span style="color:#bcbec4;font-weight:700">}</span></span>
<span class="m" style="left:947px;width:100px;text-align:right;top:765.3px;font-size:26.3px;line-height:30px;color:#50555f">13</span>
<span class="m" style="left:947px;width:100px;text-align:right;top:817.3px;font-size:26.3px;line-height:30px;color:#50555f">14</span>
<span class="m code" style="left:1153.0px;top:803.4px"><span style="color:#b3ae60;">    @Override</span></span>
<span class="m" style="left:947px;width:100px;text-align:right;top:869.3px;font-size:26.3px;line-height:30px;color:#50555f">15</span>
<span class="m code" style="left:1153.0px;top:855.4px"><span style="color:#cf8e6d;">    public void </span><span style="color:#56a8f5;">doFilter</span><span style="color:#bcbec4;">(ServletRequest servletRequest, ServletResponse servletResponse, FilterChain filterChain) throws IOException, ServletException {</span></span>
<span class="m" style="left:947px;width:100px;text-align:right;top:921.3px;font-size:26.3px;line-height:30px;color:#50555f">16</span>
<span class="m code" style="left:1153.0px;top:907.4px"><span style="color:#7a7e85;">        // </span><span style="color:#7a7e85;font-family:'Noto Sans CJK SC',sans-serif;position:relative;top:-2.5px">放行</span></span>
<span class="m" style="left:947px;width:100px;text-align:right;top:973.3px;font-size:26.3px;line-height:30px;color:#50555f">17</span>
<span class="m code" style="left:1153.0px;top:959.4px"><span style="color:#bcbec4;">        System.</span><span style="color:#c77dbb;font-style:italic">out</span><span style="color:#bcbec4;">.println(</span><span style="color:#6aab73;">"&gt;&gt;&gt;&gt; Filter!!! "</span><span style="color:#bcbec4;">);</span></span>
<span class="m" style="left:947px;width:100px;text-align:right;top:1025.3px;font-size:26.3px;line-height:30px;color:#50555f">18</span>
<span class="m code" style="left:1153.0px;top:1011.4px"><span style="color:#bcbec4;">    }</span></span>
<span class="m" style="left:947px;width:100px;text-align:right;top:1077.3px;font-size:26.3px;line-height:30px;color:#50555f">19</span>
<span class="m" style="left:947px;width:100px;text-align:right;top:1129.3px;font-size:26.3px;line-height:30px;color:#50555f">20</span>
<span class="m code" style="left:1153.0px;top:1115.4px"><span style="color:#b3ae60;">    @Override</span></span>
<span class="m" style="left:947px;width:100px;text-align:right;top:1181.3px;font-size:26.3px;line-height:30px;color:#50555f">21</span>
<span class="m code" style="left:1153.0px;top:1167.4px"><span style="color:#cf8e6d;">    public void </span><span style="color:#56a8f5;">destroy</span><span style="color:#bcbec4;">() {</span></span>
<svg class="a" style="left:1058px;top:597.5px" width="44" height="44" viewBox="0 0 44 44" fill="none"><circle cx="14.500" cy="24" r="11.400" fill="#253627" stroke="#5fad65" stroke-width="2.200"/><path d="M10.500 18.500H18.500M14.500 18.500V29.500M10.500 29.500H18.500" stroke="#5fad65" stroke-width="2"/><path d="M30 22V6.500M25 11.500L30 6L35 11.500" stroke="#e0565b" stroke-width="2.400"/></svg>
<svg class="a" style="left:1058px;top:857.5px" width="44" height="44" viewBox="0 0 44 44" fill="none"><circle cx="14.500" cy="24" r="11.400" fill="#253627" stroke="#5fad65" stroke-width="2.200"/><path d="M10.500 18.500H18.500M14.500 18.500V29.500M10.500 29.500H18.500" stroke="#5fad65" stroke-width="2"/><path d="M30 22V6.500M25 11.500L30 6L35 11.500" stroke="#e0565b" stroke-width="2.400"/></svg>
<svg class="a" style="left:1058px;top:1169.5px" width="44" height="44" viewBox="0 0 44 44" fill="none"><circle cx="14.500" cy="24" r="11.400" fill="#253627" stroke="#5fad65" stroke-width="2.200"/><path d="M10.500 18.500H18.500M14.500 18.500V29.500M10.500 29.500H18.500" stroke="#5fad65" stroke-width="2"/><path d="M30 22V6.500M25 11.500L30 6L35 11.500" stroke="#e0565b" stroke-width="2.400"/></svg>
<span class="t" style="left:1415.0px;top:817.8px;font-size:25px;line-height:25px;color:#7d8189;letter-spacing:1.627px;">no usages</span>
<div class="a" style="left:1218.500px;top:908px;width:2px;height:104px;background:#35373c"></div>
<svg class="a" style="left:2787px;top:329px" width="27" height="25" viewBox="0 0 30 28"><path d="M15 2.500L28 26H2Z" fill="#d6ae58" stroke="#d6ae58" stroke-width="3" stroke-linejoin="round"/><path d="M15 10V18" stroke="#191a1c" stroke-width="3.200"/><circle cx="15" cy="22.300" r="1.900" fill="#191a1c"/></svg>
</div></div>
<div class="a" style="left:999px;top:315px;width:1811px;height:2px;background:#2a2c30"></div>
<div class="a" style="left:1726px;top:246px;width:291px;height:56px;border-radius:11px;background:#25324d;border:2px solid #35538f;box-sizing:border-box"></div>
<svg class="a" style="left:1027.7px;top:259.0px" width="32" height="32" viewBox="0 0 16 16" stroke-width="1"><circle cx="8" cy="8" r="6.500" fill="#25324d" stroke="#548af7"/><path d="M10.400 5.900A3.200 3.200 0 1 0 10.400 10.100" fill="none" stroke="#548af7" stroke-width="1.100"/></svg>
<span class="t" style="left:1070.7px;top:262.1px;font-size:26.5px;line-height:26.5px;color:#d1d3d9;letter-spacing:-0.459px;">Demo1.java</span>
<svg class="a" style="left:1284.0px;top:259.0px" width="32" height="32" viewBox="0 0 16 16" stroke-width="1"><path d="M3.500 8.500V4.600L7 1.100H11a1.500 1.500 0 0 1 1.500 1.500V8.500" fill="#3d2b26" stroke="#c4855a" stroke-width="1.100" stroke-linejoin="round"/><path d="M3.700 4.600H7V1.300" fill="none" stroke="#c4855a" stroke-width="1.100"/><text x="8" y="15.500" font-family="Liberation Sans, sans-serif" font-size="8.100" fill="#ced0d6" stroke="#ced0d6" stroke-width="0.200" text-anchor="middle" letter-spacing="-0.350">JSP</text></svg>
<span class="t" style="left:1326.0px;top:262.1px;font-size:26.5px;line-height:26.5px;color:#d1d3d9;letter-spacing:0.346px;">index.jsp</span>
<svg class="a" style="left:1512.7px;top:259.0px" width="32" height="32" viewBox="0 0 16 16" stroke-width="1"><path d="M3.500 8.500V4.600L7 1.100H11a1.500 1.500 0 0 1 1.500 1.500V8.500" fill="#3d2b26" stroke="#c4855a" stroke-width="1.100" stroke-linejoin="round"/><path d="M3.700 4.600H7V1.300" fill="none" stroke="#c4855a" stroke-width="1.100"/><text x="8" y="15.500" font-family="Liberation Sans, sans-serif" font-size="8.100" fill="#ced0d6" stroke="#ced0d6" stroke-width="0.200" text-anchor="middle" letter-spacing="-0.350">JSP</text></svg>
<span class="t" style="left:1554.7px;top:262.1px;font-size:26.5px;line-height:26.5px;color:#d1d3d9;letter-spacing:0.223px;">demo.jsp</span>
<svg class="a" style="left:1741.6px;top:259.0px" width="32" height="32" viewBox="0 0 16 16" stroke-width="1"><circle cx="8" cy="8" r="6.500" fill="#25324d" stroke="#548af7"/><path d="M10.400 5.900A3.200 3.200 0 1 0 10.400 10.100" fill="none" stroke="#548af7" stroke-width="1.100"/></svg>
<span class="t" style="left:1784.6px;top:262.1px;font-size:26.5px;line-height:26.5px;color:#d1d3d9;letter-spacing:-0.009px;">FilterDemo.java</span>
<span class="t" style="left:2047px;top:252.2px;font-size:38px;line-height:38px;color:#5078d2;font-style:italic">m</span>
<span class="t" style="left:2091.0px;top:262.1px;font-size:26.5px;line-height:26.5px;color:#d1d3d9;letter-spacing:0.250px;">pom.xml (FilterDemo)</span>
<svg class="a" style="left:1984px;top:265px" width="18" height="18" viewBox="0 0 18 18"><path d="M2.500 2.500L15.500 15.500M15.500 2.500L2.500 15.500" stroke="#868a91" stroke-width="1.800" fill="none"/></svg>
</div></div>
<div class="a" style="left:1140.500px;top:796px;width:1601.500px;height:294px;border:8px solid #9ad53a;border-radius:8px;box-sizing:border-box"></div>
<div class="panel" style="left:279px;top:1189px;width:2600px;height:592px"></div>
<div class="a clip" style="left:279px;top:1189px;width:2531px;height:592px;border-radius:20px 0 0 20px"><div class="a" style="left:-279px;top:-1189px">
<span class="t" style="left:304.6px;top:1218.1px;font-size:26.5px;line-height:26.5px;color:#d1d3d9;font-weight:700;-webkit-text-stroke:0.15px currentColor;letter-spacing:0.171px;">Services</span>
<div class="a" style="left:279px;top:1270px;width:2531px;height:2px;background:#2a2c30"></div>
<div class="a" style="left:916.200px;top:1271px;width:2.500px;height:520px;background:#26282b"></div>
<svg class="a" style="left:299px;top:1286px" width="48" height="40" viewBox="0 0 48 40" fill="none" stroke="#ced0d6" stroke-width="2.400"><path d="M20.500 6V34M6.500 20H34.500"/><path d="M37.500 37V30L30.500 37Z" fill="#ced0d6" stroke="none"/></svg>
<svg class="a" style="left:351px;top:1286px" width="48" height="40" viewBox="0 0 48 40" fill="none" stroke="#ced0d6" stroke-width="2.400"><path d="M5 20C9 12.500 14.500 9 20.500 9S32 12.500 36 20C32 27.500 26.500 31 20.500 31S9 27.500 5 20Z"/><circle cx="20.500" cy="20" r="5.200"/><path d="M39 37V30L32 37Z" fill="#ced0d6" stroke="none"/></svg>
<svg class="a" style="left:404px;top:1284px" width="44" height="44" viewBox="0 0 44 44" fill="none" stroke="#ced0d6" stroke-width="2.400" stroke-linecap="round"><path d="M19 13H9.500A3 3 0 0 0 6.500 16V32A3 3 0 0 0 9.500 35H27.500A3 3 0 0 0 30.500 32V24"/><path d="M30 4.500V17.500M23.500 11H36.500"/></svg>
<div class="a" style="left:456px;top:1287px;width:2px;height:38px;background:#393b40"></div>
<svg class="a" style="left:470px;top:1286px" width="40" height="40" viewBox="0 0 40 40" fill="none" stroke="#ced0d6" stroke-width="2.400"><path d="M12.500 15.500L20 8L27.500 15.500M12.500 24.500L20 32L27.500 24.500"/></svg>
<svg class="a" style="left:522px;top:1286px" width="40" height="40" viewBox="0 0 40 40" fill="none" stroke="#ced0d6" stroke-width="2.400"><path d="M12.500 8L20 15.500L27.500 8M12.500 32L20 24.500L27.500 32"/></svg>
<svg class="a" style="left:304.0px;top:1358.0px" width="32" height="32" viewBox="0 0 16 16" stroke-width="1"><path d="M4.200 6.100L8 9.900L11.800 6.100" fill="none" stroke="#b4b8bf" stroke-width="1.100"/></svg>
<svg class="a" style="left:346.0px;top:1358.0px" width="32" height="32" viewBox="0 0 16 16" stroke-width="1"><path d="M6.200 9.500C4.800 8 3.200 8.200 2.300 9.700" fill="none" stroke="#2a2110" stroke-width="0.9"/><path d="M1.200 13.200C3.800 12.300 5.300 10.600 6.800 9.200C8.400 7.900 10 8.400 11.600 9.400L14.700 13C12.800 12.600 11.200 12 9.600 11.900C7 11.700 4.200 13.500 1.200 13.200Z" fill="#d9a53a" stroke="#2a2110" stroke-width="0.45"/><path d="M9.300 11.100L10.400 13.300M5.200 11.300L4.300 13.300" fill="none" stroke="#2a2110" stroke-width="0.8"/><path d="M8.200 3.500L9.700 4.900H12.500L14 3.500L14.200 7.200C14.200 8.800 12.800 10 11.100 10C9.400 10 8 8.800 8 7.200Z" fill="#f2e3a0" stroke="#2a2110" stroke-width="0.55" stroke-linejoin="round"/><circle cx="9.900" cy="6.900" r="0.450" fill="#2a2110"/><circle cx="12.300" cy="6.900" r="0.450" fill="#2a2110"/><path d="M10.600 8.100H11.600L11.100 8.700Z" fill="#2a2110"/></svg>
<span class="t" style="left:386.0px;top:1362.1px;font-size:26.5px;line-height:26.5px;color:#d1d3d9;letter-spacing:0.091px;">Tomcat Server</span>
<div class="a" style="left:304px;top:1398px;width:588px;height:48px;border-radius:8px;background:#393b40"></div>
<svg class="a" style="left:384.0px;top:1406.0px" width="32" height="32" viewBox="0 0 16 16" stroke-width="1"><path d="M6.200 9.500C4.800 8 3.200 8.200 2.300 9.700" fill="none" stroke="#2a2110" stroke-width="0.9"/><path d="M1.200 13.200C3.800 12.300 5.300 10.600 6.800 9.200C8.400 7.900 10 8.400 11.600 9.400L14.700 13C12.800 12.600 11.200 12 9.600 11.900C7 11.700 4.200 13.500 1.200 13.200Z" fill="#d9a53a" stroke="#2a2110" stroke-width="0.45"/><path d="M9.300 11.100L10.400 13.300M5.200 11.300L4.300 13.300" fill="none" stroke="#2a2110" stroke-width="0.8"/><path d="M8.200 3.500L9.700 4.900H12.500L14 3.500L14.200 7.200C14.200 8.800 12.800 10 11.100 10C9.400 10 8 8.800 8 7.200Z" fill="#f2e3a0" stroke="#2a2110" stroke-width="0.55" stroke-linejoin="round"/><circle cx="9.900" cy="6.900" r="0.450" fill="#2a2110"/><circle cx="12.300" cy="6.900" r="0.450" fill="#2a2110"/><path d="M10.600 8.100H11.600L11.100 8.700Z" fill="#2a2110"/></svg>
<svg class="a" style="left:404.500px;top:1424.500px" width="12" height="14" viewBox="0 0 12 14"><path d="M1 0.500V13.500L11.500 7Z" fill="#62b166"/></svg>
<span class="t" style="left:423.5px;top:1410.1px;font-size:26.5px;line-height:26.5px;color:#d1d3d9;font-weight:700;-webkit-text-stroke:0.15px currentColor;letter-spacing:0.328px;">Tomcat9</span>
<span class="t" style="left:542.9px;top:1410.1px;font-size:26.5px;line-height:26.5px;color:#868a91;letter-spacing:0.182px;">[local]</span>
<svg class="a" style="left:347.0px;top:1452.0px" width="34" height="34" viewBox="0 0 16 16" stroke-width="1"><path d="M0.800 8.500H12.400C12.600 7.400 13.400 6.900 14.200 6.900C14.800 7.500 15.200 8.200 15 9C15.600 9 16 9.200 16 9.200C15.600 10.500 14.400 11 13.200 11C12 13.600 9.600 15 6.600 15C3 15 0.800 12.600 0.800 8.500Z" fill="#4f88f2"/><rect x="3.200" y="3" width="4.800" height="4.800" rx="0.800" fill="#4f88f2"/><path d="M10 1L14.500 5.500M14.500 1L10 5.500" stroke="#d05a58" stroke-width="1.100" fill="none"/></svg>
<span class="t" style="left:384.5px;top:1458.1px;font-size:26.5px;line-height:26.5px;color:#d1d3d9;letter-spacing:0.144px;">Docker</span>
<svg class="a" style="left:946px;top:1286px" width="40" height="40" viewBox="0 0 40 40" fill="none" stroke="#ced0d6" stroke-width="2.200" stroke-linecap="round" stroke-linejoin="round"><path d="M16 30.500A12.500 12.500 0 1 1 29 13"/><path d="M29.500 5V13H21.500"/><path d="M22 22V35L33 28.500Z" stroke="#65a36b"/></svg>
<svg class="a" style="left:998px;top:1286px" width="40" height="40" viewBox="0 0 40 40" fill="none" stroke="#ced0d6" stroke-width="2.200" stroke-linecap="round" stroke-linejoin="round"><path d="M16 30.500A12.500 12.500 0 1 1 29 13"/><path d="M29.500 5V13H21.500"/><g stroke="#65a36b"><ellipse cx="28" cy="29" rx="4.500" ry="5.500"/><path d="M25 22.500A3 3 0 0 1 31 22.500M23.500 29H20M32.500 29H36M24 33L21 36M32 33L35 36M24 25.500L21.500 23M32 25.500L34.500 23"/></g></svg>
<div class="a" style="left:1055.500px;top:1294px;width:25px;height:25px;border-radius:4px;background:#5e3a3c;border:2.500px solid #e0605c;box-sizing:border-box"></div>
<svg class="a" style="left:1100px;top:1286px" width="40" height="40" viewBox="0 0 40 40" fill="none" stroke="#ced0d6" stroke-width="2.200" stroke-linecap="round" stroke-linejoin="round"><path d="M31 24A12.500 12.500 0 1 1 29.500 13"/><path d="M30 5V13H22"/></svg>
<div class="a" style="left:1152px;top:1287px;width:2px;height:38px;background:#393b40"></div>
<svg class="a" style="left:1164px;top:1286px" width="44" height="40" viewBox="0 0 44 40" fill="none" stroke="#ced0d6" stroke-width="2.200" stroke-linecap="round"><path d="M8 29.500A14 14 0 1 1 35 29.500H8Z" stroke-linejoin="round"/><circle cx="21.500" cy="22.500" r="2.800"/><path d="M23.500 20.500L28.500 15"/><path d="M41 37V30L34 37Z" fill="#ced0d6" stroke="none"/></svg>
<div class="a" style="left:1235.500px;top:1293.5px;width:5px;height:5px;border-radius:50%;background:#ced0d6"></div>
<div class="a" style="left:1235.500px;top:1303.5px;width:5px;height:5px;border-radius:50%;background:#ced0d6"></div>
<div class="a" style="left:1235.500px;top:1313.5px;width:5px;height:5px;border-radius:50%;background:#ced0d6"></div>
<div class="a" style="left:1296px;top:1281px;width:115px;height:52px;border-radius:10px;background:#2b2d30;border:2px solid #3b3d42;box-sizing:border-box"></div>
<span class="t" style="left:1314.7px;top:1293.6px;font-size:26.5px;line-height:26.5px;color:#d1d3d9;letter-spacing:-0.058px;">Server</span>
<svg class="a" style="left:1442px;top:1291px" width="32" height="32" viewBox="0 0 16 16" fill="none" stroke="#ced0d6"><rect x="1.500" y="2.500" width="13" height="11" rx="1.500" fill="#43454a"/><path d="M4 6L6.500 8L4 10M7.500 10.500H11"/></svg>
<span class="t" style="left:1484.9px;top:1293.6px;font-size:26.5px;line-height:26.5px;color:#d1d3d9;letter-spacing:0.301px;">Tomcat Localhost Log</span>
<svg class="a" style="left:1830px;top:1291px" width="32" height="32" viewBox="0 0 16 16" fill="none" stroke="#ced0d6"><rect x="1.500" y="2.500" width="13" height="11" rx="1.500" fill="#43454a"/><path d="M4 6L6.500 8L4 10M7.500 10.500H11"/></svg>
<span class="t" style="left:1873.0px;top:1293.6px;font-size:26.5px;line-height:26.5px;color:#d1d3d9;letter-spacing:0.112px;">Tomcat Catalina Log</span>
<div class="a" style="left:917px;top:1340.200px;width:1893px;height:2.500px;background:#26282b"></div>
<div class="a" style="left:918.700px;top:1342.700px;width:14.300px;height:439px;background:#17181a"></div>
<div class="a" style="left:933px;top:1342.700px;width:2px;height:439px;background:#26282b"></div>
<div class="a" style="left:936.300px;top:1342.700px;width:1.800px;height:439px;background:#222427"></div>
<div class="a" style="left:1014px;top:1342.700px;width:3.500px;height:439px;background:#26282c"></div>
<div class="a clip" style="left:918.700px;top:1360px;width:14.300px;height:40px"><svg class="a" style="left:0;top:0" width="30" height="40" viewBox="0 0 30 40"><path d="M8 16.500L16 26" stroke="#65a36b" stroke-width="4" stroke-linecap="round"/></svg></div>
<svg class="a" style="left:956px;top:1356px" width="40" height="40" viewBox="0 0 40 40" fill="none" stroke="#65a36b" stroke-width="2.300"><path d="M6 20.800H33.500M26.500 14L34 20.800L26.500 27.600M12.700 15.300L21 7M14.100 6.700H21.600V14M12.700 26.300L21 34.600M14.100 34.900H21.600V27.600"/></svg>
<svg class="a" style="left:956px;top:1409px" width="40" height="40" viewBox="0 0 40 40" fill="none" stroke="#5f6165" stroke-width="2.300"><path d="M32.700 21H7.200M14.400 14.300L6.700 21L14.400 27.700M19.400 15.400L27.300 7.700M20 7.300H27.800V15.200M19.400 26.600L27.300 34.300M20 34.700H27.800V26.800"/></svg>
<svg class="a" style="left:956px;top:1462px" width="40" height="40" viewBox="0 0 40 40" fill="none" stroke="#ced0d6" stroke-width="2.200" stroke-linecap="round" stroke-linejoin="round"><path d="M8.500 17A12 12 0 0 1 30 13.500M31.500 23A12 12 0 0 1 10 26.500"/><path d="M3.500 13L8.500 18L13 12.500M36.500 27L31.500 22L27 27.500"/></svg>
<svg class="a" style="left:956px;top:1516px" width="40" height="40" viewBox="0 0 40 40" fill="none" stroke="#ced0d6" stroke-width="2.200" stroke-linecap="round" stroke-linejoin="round"><path d="M22 30.500H8.500A3 3 0 0 1 5.500 27.500V9.500A3 3 0 0 1 8.500 6.500H28.500A3 3 0 0 1 31.500 9.500V15" fill="#43454a"/><path d="M10.500 12H13M16 12H18.500"/><path d="M30.500 20V34M25 28.500L30.500 34L36 28.500" stroke="#65a36b"/></svg>
<div class="a clip" style="left:1018px;top:1342px;width:1792px;height:439px"><div class="a" style="left:-1018px;top:-1342px">
<span class="m code" style="left:1044.0px;top:1314.3px;color:#bcbec4">[2026-01-23 02:12:30,901] Artifact Filter_Demo:war exploded: Artifact is being deployed, please wait...</span>
<span class="m code" style="left:1044.0px;top:1366.3px;color:#bcbec4">[2026-01-23 02:12:31,002] Artifact Filter_Demo:war exploded: Artifact is deployed successfully</span>
<span class="m code" style="left:1044.0px;top:1418.3px;color:#bcbec4">[2026-01-23 02:12:31,002] Artifact Filter_Demo:war exploded: Deploy took 101 milliseconds</span>
<span class="m code" style="left:1044.0px;top:1470.3px;color:#bcbec4">&gt;&gt;&gt;&gt; Filter!!! </span>
<span class="m code" style="left:1044.0px;top:1522.3px;color:#bcbec4">&gt;&gt;&gt;&gt; Filter!!! </span>
<span class="m code" style="left:1044.0px;top:1574.3px;color:#bcbec4">&gt;&gt;&gt;&gt; Filter!!! </span>
<span class="m code" style="left:1044.0px;top:1626.3px;color:#f0525f">23-Jan-2026 14:12:40.733 信息 [Catalina-utility-2] org.apache.catalina.startup.HostConfig.deployDirectory 把web 应用程序部署到目录</span>
<span class="m code" style="left:1044.0px;top:1678.3px;color:#f0525f">23-Jan-2026 14:12:40.774 信息 [Catalina-utility-2] org.apache.catalina.startup.HostConfig.deployDirectory Web应用程序目录的部署已完成</span>
</div></div>
</div></div>
<div class="a" style="left:1006.300px;top:1459.300px;width:447.500px;height:164.300px;border:8px solid #9ad53a;border-radius:8px;box-sizing:border-box"></div>
<div class="a" style="left:226px;top:1808px;width:16px;height:16px;border-radius:4.500px;border:2.200px solid #548af7;background:#25324d;box-sizing:border-box"></div>
<span class="t" style="left:250.8px;top:1802.1px;font-size:26.5px;line-height:26.5px;color:#9da0a8;letter-spacing:0.063px;">FilterDemo</span>
<svg class="a" style="left:397px;top:1804px" width="16" height="24" viewBox="0 0 16 24"><path d="M4 4.500L11.500 12L4 19.500" fill="none" stroke="#9da0a8" stroke-width="2"/></svg>
<div class="a" style="left:429.4px;top:1808px;width:16px;height:16px;border-radius:4.500px;border:2.200px solid #548af7;background:#25324d;box-sizing:border-box"></div>
<span class="t" style="left:454.6px;top:1802.1px;font-size:26.5px;line-height:26.5px;color:#9da0a8;letter-spacing:0.100px;">Filter_Demo</span>
<svg class="a" style="left:618px;top:1804px" width="16" height="24" viewBox="0 0 16 24"><path d="M4 4.500L11.500 12L4 19.500" fill="none" stroke="#9da0a8" stroke-width="2"/></svg>
<span class="t" style="left:650.4px;top:1802.1px;font-size:26.5px;line-height:26.5px;color:#9da0a8;letter-spacing:0.092px;">src</span>
<svg class="a" style="left:703px;top:1804px" width="16" height="24" viewBox="0 0 16 24"><path d="M4 4.500L11.500 12L4 19.500" fill="none" stroke="#9da0a8" stroke-width="2"/></svg>
<span class="t" style="left:736.6px;top:1802.1px;font-size:26.5px;line-height:26.5px;color:#9da0a8;letter-spacing:-0.184px;">main</span>
<svg class="a" style="left:809px;top:1804px" width="16" height="24" viewBox="0 0 16 24"><path d="M4 4.500L11.500 12L4 19.500" fill="none" stroke="#9da0a8" stroke-width="2"/></svg>
<span class="t" style="left:841.6px;top:1802.1px;font-size:26.5px;line-height:26.5px;color:#9da0a8;letter-spacing:-0.178px;">java</span>
<svg class="a" style="left:907px;top:1804px" width="16" height="24" viewBox="0 0 16 24"><path d="M4 4.500L11.500 12L4 19.500" fill="none" stroke="#9da0a8" stroke-width="2"/></svg>
<span class="t" style="left:940.5px;top:1802.1px;font-size:26.5px;line-height:26.5px;color:#9da0a8;letter-spacing:0.247px;">com</span>
<svg class="a" style="left:1009.6px;top:1804px" width="16" height="24" viewBox="0 0 16 24"><path d="M4 4.500L11.500 12L4 19.500" fill="none" stroke="#9da0a8" stroke-width="2"/></svg>
<span class="t" style="left:1042.9px;top:1802.1px;font-size:26.5px;line-height:26.5px;color:#9da0a8;letter-spacing:0.033px;">xekoner</span>
<svg class="a" style="left:1153px;top:1804px" width="16" height="24" viewBox="0 0 16 24"><path d="M4 4.500L11.500 12L4 19.500" fill="none" stroke="#9da0a8" stroke-width="2"/></svg>
<span class="t" style="left:1187.0px;top:1802.1px;font-size:26.5px;line-height:26.5px;color:#9da0a8;letter-spacing:0.130px;">web</span>
<svg class="a" style="left:1253px;top:1804px" width="16" height="24" viewBox="0 0 16 24"><path d="M4 4.500L11.500 12L4 19.500" fill="none" stroke="#9da0a8" stroke-width="2"/></svg>
<span class="t" style="left:1286.6px;top:1802.1px;font-size:26.5px;line-height:26.5px;color:#9da0a8;letter-spacing:0.557px;">filter</span>
<svg class="a" style="left:1357.5px;top:1804px" width="16" height="24" viewBox="0 0 16 24"><path d="M4 4.500L11.500 12L4 19.500" fill="none" stroke="#9da0a8" stroke-width="2"/></svg>
<svg class="a" style="left:1390.0px;top:1798.0px" width="32" height="32" viewBox="0 0 16 16" stroke-width="1"><circle cx="8" cy="8" r="6.500" fill="#25324d" stroke="#548af7"/><path d="M10.400 5.900A3.200 3.200 0 1 0 10.400 10.100" fill="none" stroke="#548af7" stroke-width="1.100"/></svg>
<span class="t" style="left:1430.0px;top:1802.1px;font-size:26.5px;line-height:26.5px;color:#9da0a8;letter-spacing:0.143px;">FilterDemo</span>
<svg class="a" style="left:1577.7px;top:1804px" width="16" height="24" viewBox="0 0 16 24"><path d="M4 4.500L11.500 12L4 19.500" fill="none" stroke="#9da0a8" stroke-width="2"/></svg>
<svg class="a" style="left:1610.0px;top:1798.0px" width="32" height="32" viewBox="0 0 16 16" stroke-width="1"><circle cx="8" cy="8" r="6.500" fill="#402929" stroke="#db5c5c"/><path d="M5 11V7.200M5 8.300C5 7 8 7 8 8.300V11M8 8.300C8 7 11 7 11 8.300V11" fill="none" stroke="#db5c5c" stroke-width="1.100"/></svg>
<span class="t" style="left:1650.8px;top:1802.1px;font-size:26.5px;line-height:26.5px;color:#9da0a8;letter-spacing:0.256px;">init</span>
<span class="t" style="left:2502.4px;top:1802.1px;font-size:26.5px;line-height:26.5px;color:#9da0a8;letter-spacing:-0.243px;">12:6</span>
<span class="t" style="left:2587.3px;top:1802.1px;font-size:26.5px;line-height:26.5px;color:#9da0a8;letter-spacing:-1.811px;">LF</span>
<span class="t" style="left:2649.0px;top:1802.1px;font-size:26.5px;line-height:26.5px;color:#9da0a8;letter-spacing:0.386px;">UTF-8</span>
<svg class="a" style="left:2756px;top:1797px" width="32" height="34" viewBox="0 0 32 34" fill="none" stroke="#9da0a8" stroke-width="2.200" stroke-linecap="round"><path d="M14 29.500H6.500A3 3 0 0 1 3.500 26.500V6.500A3 3 0 0 1 6.500 3.500H22.500A3 3 0 0 1 25.500 6.500V16"/><path d="M8.500 10.500H20.500M8.500 16H17M8.500 21.500H13"/><circle cx="22" cy="24.500" r="4.800"/><path d="M25.500 28.500L30 33"/></svg>
<span class="t" style="left:2799.5px;top:1802.1px;font-size:26.5px;line-height:26.5px;color:#9da0a8;">4 spaces</span>
</div></div>
</body></html>
